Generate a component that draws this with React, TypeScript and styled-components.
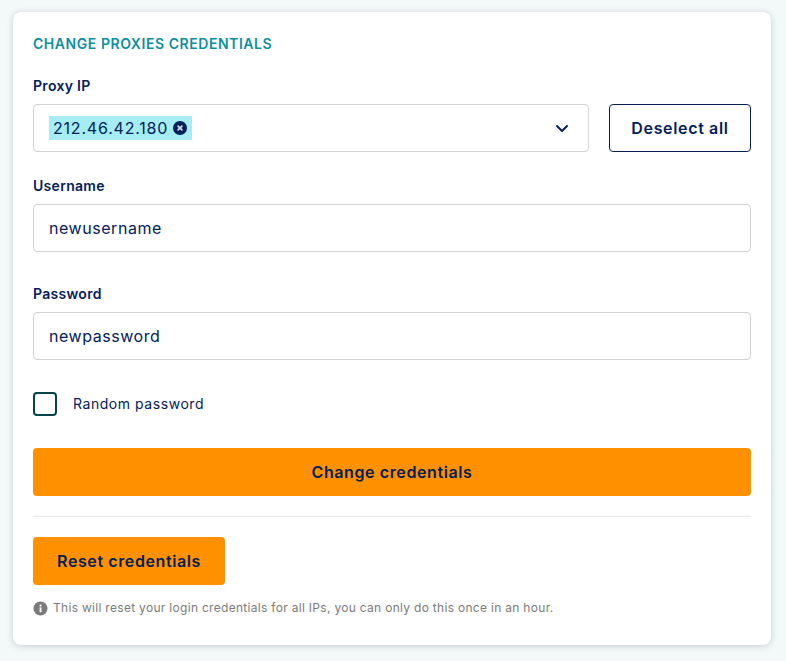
import styled, { createGlobalStyle } from "styled-components";

const navy = "#04205c";

const GlobalStyle = createGlobalStyle`
  html, body {
    margin: 0;
    padding: 0;
    background: #f3f8f8;
    font-family: "Inter", "Liberation Sans", sans-serif;
    color: ${navy};
  }
`;

const Page = styled.div`
  padding: 12px 15px 16px 13px;
  height: 661px;
  box-sizing: border-box;
`;

const Card = styled.section`
  height: 633px;
  box-sizing: border-box;
  padding: 24px 20px 0;
  background: #fff;
  border-radius: 8px;
  box-shadow: 0 1px 6px rgba(40, 70, 80, 0.22);
`;

const Title = styled.h2`
  margin: 0 0 25px;
  height: 16px;
  font-size: 14px;
  line-height: 16px;
  font-weight: 600;
  letter-spacing: 0.55px;
  color: #0b8fa1;
`;

const Label = styled.label`
  display: block;
  height: 18px;
  margin-bottom: 9px;
  font-size: 14px;
  line-height: 18px;
  font-weight: 600;
  letter-spacing: 0.3px;
  color: ${navy};
`;

const Field = styled.div<{ $mb?: number }>`
  margin-bottom: ${(p) => p.$mb ?? 0}px;
`;

const SelectRow = styled.div`
  display: flex;
  gap: 20px;
`;

const Box = styled.div`
  flex: 1;
  height: 48px;
  box-sizing: border-box;
  display: flex;
  align-items: center;
  padding: 0 15px;
  border: 1px solid #d2d2d2;
  border-radius: 4px;
  background: #fff;
  font-size: 16px;
  letter-spacing: 0.55px;
  color: ${navy};
`;

const Tag = styled.span`
  display: inline-flex;
  align-items: center;
  gap: 5px;
  height: 24px;
  padding: 0 5px 0 4px;
  background: #a5edf3;
  border-radius: 1px;
  font-size: 16px;
  letter-spacing: 0.8px;
`;

const Chevron = styled.svg`
  margin-left: auto;
  margin-right: 4px;
`;

const OutlineButton = styled.button`
  width: 142px;
  height: 48px;
  border: 1px solid ${navy};
  border-radius: 4px;
  background: #fff;
  font: 600 16px "Inter", sans-serif;
  letter-spacing: 0.65px;
  color: ${navy};
  padding: 0;
`;

const CheckRow = styled.div`
  display: flex;
  align-items: center;
  gap: 16px;
  margin-bottom: 32px;
`;

const CheckBox = styled.span`
  width: 24px;
  height: 24px;
  box-sizing: border-box;
  border: 2px solid #05444f;
  border-radius: 4px;
`;

const CheckLabel = styled.span`
  margin-top: -2px;
  font-size: 14px;
  letter-spacing: 0.55px;
`;

const OrangeButton = styled.button<{ $wide?: boolean }>`
  display: block;
  width: ${(p) => (p.$wide ? "100%" : "192px")};
  height: 48px;
  padding: 0;
  border: 0;
  border-radius: 4px;
  background: #ff9100;
  font: 600 16px "Inter", sans-serif;
  letter-spacing: 0.6px;
  color: ${navy};
`;

const Divider = styled.hr`
  margin: 20px 0;
  border: 0;
  border-top: 1px solid #e8e8e8;
`;

const Hint = styled.p`
  display: flex;
  align-items: center;
  gap: 5px;
  margin: 15px 0 0;
  font-size: 12px;
  line-height: 16px;
  letter-spacing: 0.3px;
  color: #7b7b7b;
`;

export default function App() {
  return (
    <Page>
      <GlobalStyle />
      <Card>
        <Title>CHANGE PROXIES CREDENTIALS</Title>
        <Field $mb={25}>
          <Label>Proxy IP</Label>
          <SelectRow>
            <Box>
              <Tag>
                212.46.42.180
                <svg width="14" height="14" viewBox="0 0 14 14">
                  <circle cx="7" cy="7" r="7" fill={navy} />
                  <path d="M4.6 4.6l4.8 4.8M9.4 4.6l-4.8 4.8" stroke="#d8e8f0" strokeWidth="1.5" />
                </svg>
              </Tag>
              <Chevron width="14" height="9" viewBox="0 0 14 9" fill="none">
                <path d="M2 2l5 5 5-5" stroke={navy} strokeWidth="2" strokeLinecap="round" strokeLinejoin="round" />
              </Chevron>
            </Box>
            <OutlineButton>Deselect all</OutlineButton>
          </SelectRow>
        </Field>
        <Field $mb={33}>
          <Label>Username</Label>
          <Box>newusername</Box>
        </Field>
        <Field $mb={32}>
          <Label>Password</Label>
          <Box>newpassword</Box>
        </Field>
        <CheckRow>
          <CheckBox />
          <CheckLabel>Random password</CheckLabel>
        </CheckRow>
        <OrangeButton $wide>Change credentials</OrangeButton>
        <Divider />
        <OrangeButton>Reset credentials</OrangeButton>
        <Hint>
          <svg width="15" height="15" viewBox="0 0 15 15">
            <circle cx="7.5" cy="7.5" r="7" fill="#7b7b7b" />
            <rect x="6.6" y="6.4" width="1.9" height="4.8" fill="#fff" />
            <rect x="6.6" y="3.6" width="1.9" height="1.8" fill="#fff" />
          </svg>
          This will reset your login credentials for all IPs, you can only do this once in an hour.
        </Hint>
      </Card>
    </Page>
  );
}
